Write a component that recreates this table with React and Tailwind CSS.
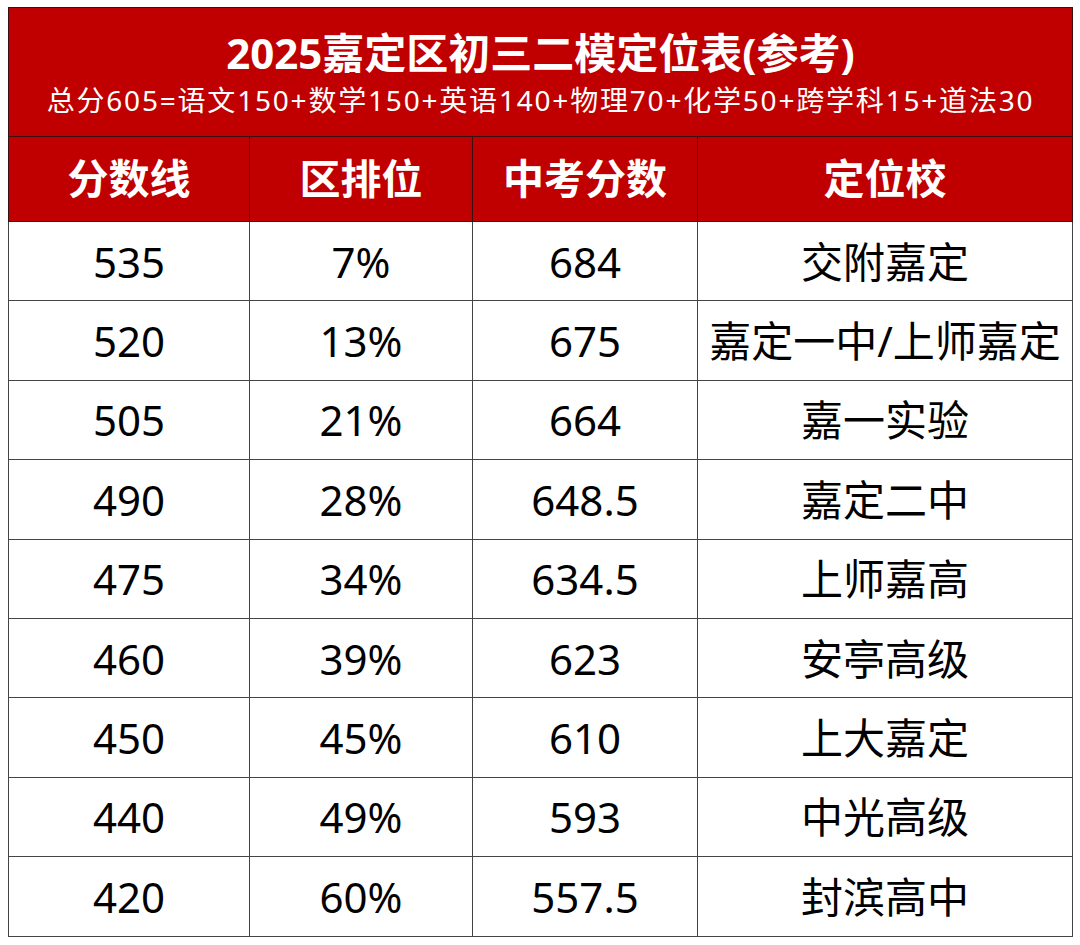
import React from "react";

const rows = [
  ["535", "7%", "684", "交附嘉定"],
  ["520", "13%", "675", "嘉定一中/上师嘉定"],
  ["505", "21%", "664", "嘉一实验"],
  ["490", "28%", "648.5", "嘉定二中"],
  ["475", "34%", "634.5", "上师嘉高"],
  ["460", "39%", "623", "安亭高级"],
  ["450", "45%", "610", "上大嘉定"],
  ["440", "49%", "593", "中光高级"],
  ["420", "60%", "557.5", "封滨高中"],
];

const headers = ["分数线", "区排位", "中考分数", "定位校"];

const App = () => {
  return (
    <div
      className="w-[1080px] h-[945px] bg-white pt-[7px] pl-[8px]"
      style={{ fontFamily: '"Noto Sans", "Noto Sans CJK SC", sans-serif' }}
    >
      <table className="border-collapse w-[1064px] table-fixed">
        <colgroup>
          <col className="w-[241px]" />
          <col className="w-[223px]" />
          <col className="w-[225px]" />
          <col className="w-[375px]" />
        </colgroup>
        <thead>
          <tr>
            <th
              colSpan={4}
              className="h-[129px] bg-[#c00000] border border-[#3a1010] text-white text-center align-middle p-0"
            >
              <div className="text-[42px] font-bold leading-[50px] mt-[2px]">
                2025嘉定区初三二模定位表(参考)
              </div>
              <div className="text-[28px] font-normal leading-[36px] mt-[4px] tracking-[1.8px] whitespace-nowrap">
                总分605=语文150+数学150+英语140+物理70+化学50+跨学科15+道法30
              </div>
            </th>
          </tr>
          <tr>
            {headers.map((h) => (
              <th
                key={h}
                className="h-[85px] bg-[#c00000] border border-[#3a1010] text-white text-[41px] font-bold text-center align-middle p-0"
              >
                {h}
              </th>
            ))}
          </tr>
        </thead>
        <tbody>
          {rows.map((r, i) => (
            <tr key={i}>
              {r.map((c, j) => (
                <td
                  key={j}
                  className="h-[79.4px] border border-[#444] text-[42px] text-black text-center align-middle p-0 whitespace-nowrap"
                >
                  {c}
                </td>
              ))}
            </tr>
          ))}
        </tbody>
      </table>
    </div>
  );
};

export default App;
